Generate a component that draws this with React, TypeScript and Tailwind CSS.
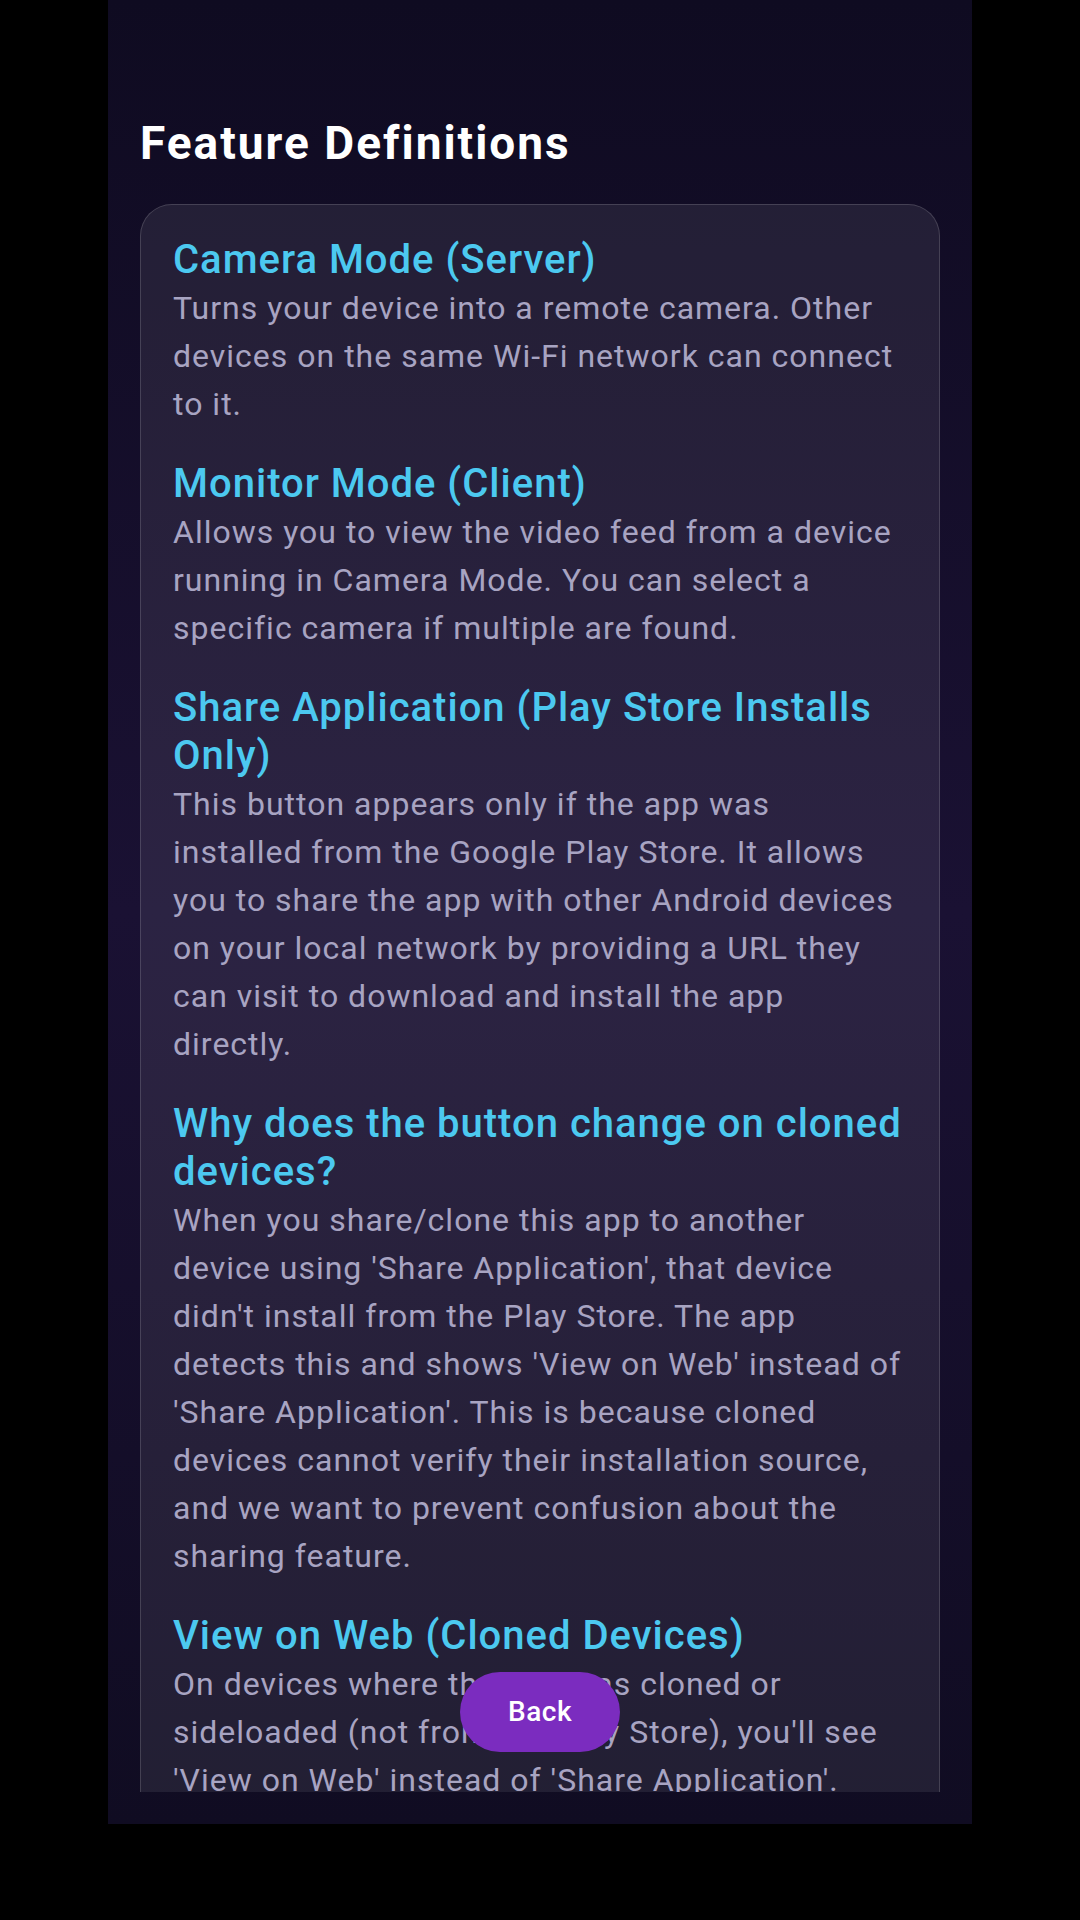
import React from 'react'

interface Feature {
    title: string
    body: string
}

const features: Feature[] = [
    {
        title: 'Camera Mode (Server)',
        body: 'Turns your device into a remote camera. Other devices on the same Wi-Fi network can connect to it.',
    },
    {
        title: 'Monitor Mode (Client)',
        body: 'Allows you to view the video feed from a device running in Camera Mode. You can select a specific camera if multiple are found.',
    },
    {
        title: 'Share Application (Play Store Installs Only)',
        body: 'This button appears only if the app was installed from the Google Play Store. It allows you to share the app with other Android devices on your local network by providing a URL they can visit to download and install the app directly.',
    },
    {
        title: 'Why does the button change on cloned devices?',
        body: "When you share/clone this app to another device using 'Share Application', that device didn't install from the Play Store. The app detects this and shows 'View on Web' instead of 'Share Application'. This is because cloned devices cannot verify their installation source, and we want to prevent confusion about the sharing feature.",
    },
    {
        title: 'View on Web (Cloned Devices)',
        body: "On devices where the app was cloned or sideloaded (not from the Play Store), you'll see 'View on Web' instead of 'Share Application'. Tapping it opens the project page in your browser.",
    },
]

const App: React.FC = () => {
    return (
        <div className="w-[1080px] h-[1920px] bg-black font-['Roboto',sans-serif]">
            <div className="ml-[108px] w-[864px] h-[1824px] flex flex-col px-8 pb-8 pt-[115px] bg-[linear-gradient(180deg,#0f0b21_0%,#1a1133_50%,#100c22_100%)]">
                <h1 className="text-[46px] leading-[56px] font-bold tracking-[2px] text-white mb-[33px]">Feature Definitions</h1>

                {/* Scroll area */}
                <div className="relative flex-1 min-h-0 overflow-hidden">
                    <div className="rounded-[32px] border border-white/15 bg-white/[0.08] px-8 pt-[31px] pb-8">
                        <div className="flex flex-col gap-8">
                            {features.map((f) => (
                                <div key={f.title}>
                                    <h2 className="text-[40px] leading-[48px] font-medium tracking-[1px] text-[#4cc9f0]">{f.title}</h2>
                                    <p className="text-[32px] leading-[48px] tracking-[1px] text-[#a8a4c2]">{f.body}</p>
                                </div>
                            ))}
                        </div>
                    </div>

                    <button
                        type="button"
                        className="absolute bottom-10 left-1/2 -translate-x-1/2 h-20 px-12 rounded-full bg-[#7b2cbf] text-white text-[28px] font-medium tracking-[0.5px]"
                    >
                        Back
                    </button>
                </div>
            </div>
        </div>
    )
}

export default App
